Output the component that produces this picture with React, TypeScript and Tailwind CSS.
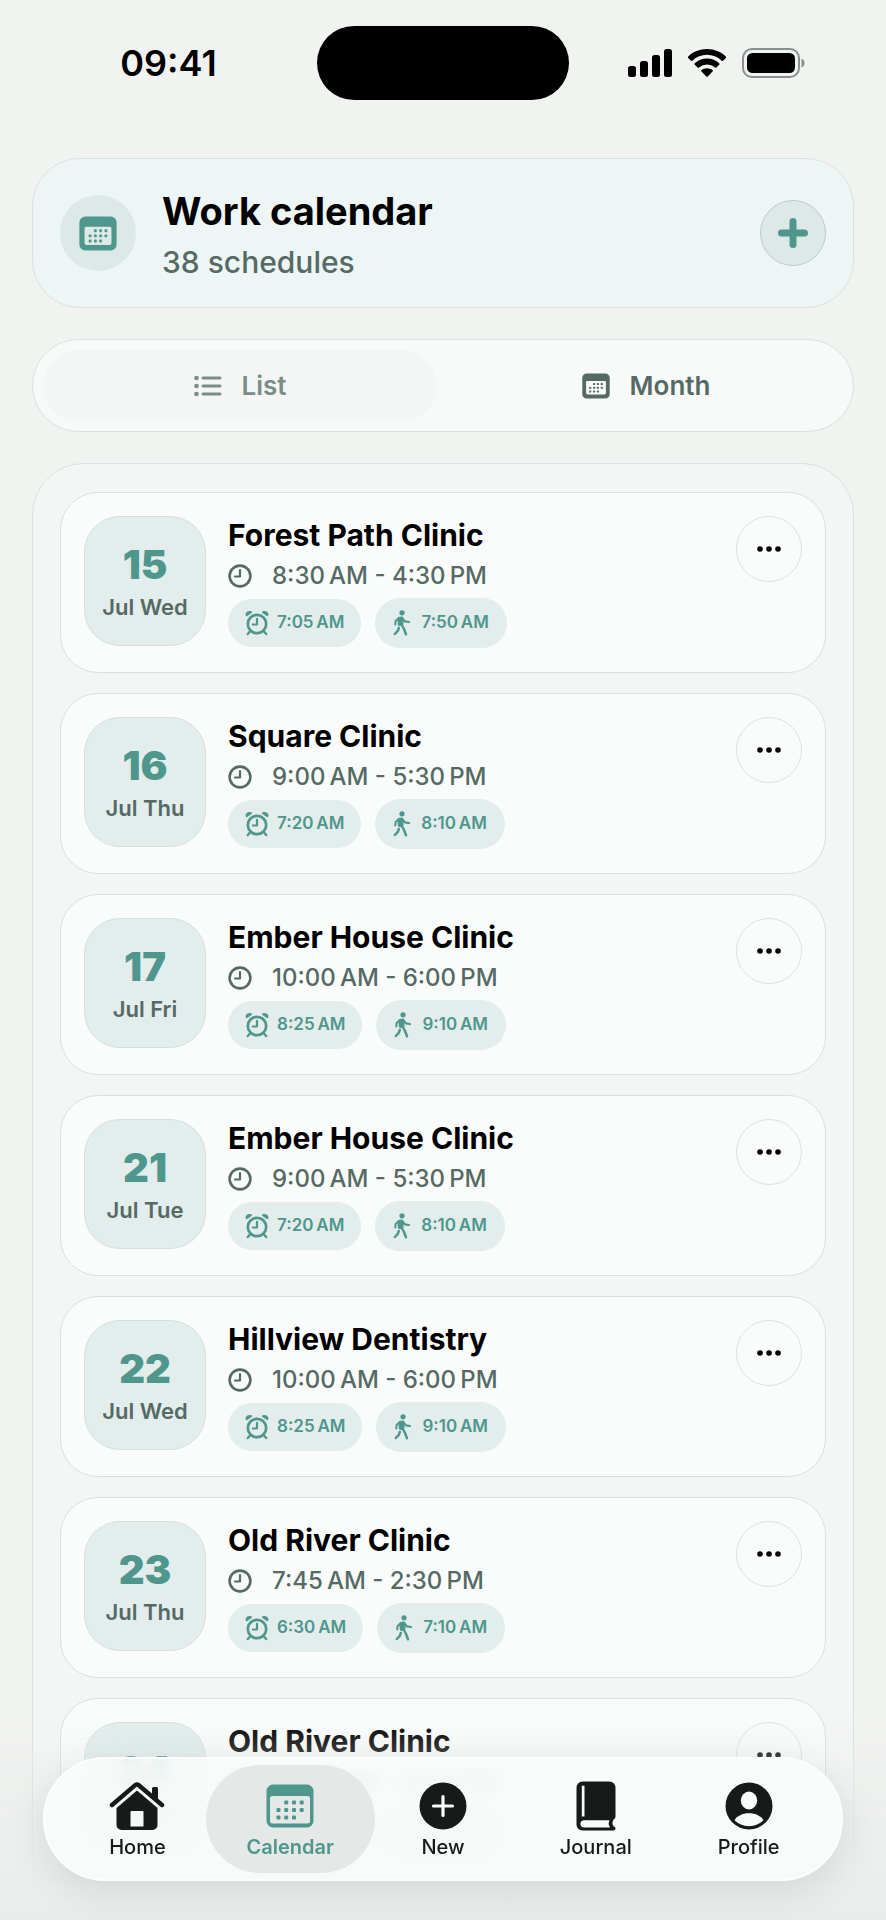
import React, { useState } from "react";

interface Schedule {
  id: number;
  day: number;
  label: string;
  clinic: string;
  start: string;
  end: string;
  alarm: string;
  leave: string;
}

interface IconProps {
  className?: string;
}

const schedules: Schedule[] = [
  { id: 1, day: 15, label: "Jul Wed", clinic: "Forest Path Clinic", start: "8:30", end: "4:30", alarm: "7:05", leave: "7:50" },
  { id: 2, day: 16, label: "Jul Thu", clinic: "Square Clinic", start: "9:00", end: "5:30", alarm: "7:20", leave: "8:10" },
  { id: 3, day: 17, label: "Jul Fri", clinic: "Ember House Clinic", start: "10:00", end: "6:00", alarm: "8:25", leave: "9:10" },
  { id: 4, day: 21, label: "Jul Tue", clinic: "Ember House Clinic", start: "9:00", end: "5:30", alarm: "7:20", leave: "8:10" },
  { id: 5, day: 22, label: "Jul Wed", clinic: "Hillview Dentistry", start: "10:00", end: "6:00", alarm: "8:25", leave: "9:10" },
  { id: 6, day: 23, label: "Jul Thu", clinic: "Old River Clinic", start: "7:45", end: "2:30", alarm: "6:30", leave: "7:10" },
  { id: 7, day: 24, label: "Jul Fri", clinic: "Old River Clinic", start: "10:00", end: "6:00", alarm: "8:25", leave: "9:10" },
];

// Thin space between the time and AM/PM
const am = (time: string) => `${time}\u2009AM`;
const pm = (time: string) => `${time}\u2009PM`;

const CalendarIcon = ({ className }: IconProps) => (
  <svg viewBox="0 0 48 44" className={className} fill="currentColor" aria-hidden="true">
    <path
      fillRule="evenodd"
      d="M7 .5h34A6.5 6.5 0 0 1 47.5 7v30a6.5 6.5 0 0 1-6.5 6.5H7A6.5 6.5 0 0 1 .5 37V7A6.5 6.5 0 0 1 7 .5ZM6.5 12A2.5 2.5 0 0 0 4 14.5V37a2.5 2.5 0 0 0 2.5 2.5h35A2.5 2.5 0 0 0 44 37V14.5A2.5 2.5 0 0 0 41.5 12Z"
    />
    {[18.5, 26, 33.5].map((y, row) =>
      [12.5, 20.2, 28, 35.7].map((x, col) =>
        (row === 0 && col === 0) || (row === 2 && col === 3) ? null : (
          <rect key={`${x}-${y}`} x={x - 2} y={y - 2} width="4" height="4" rx="1" />
        )
      )
    )}
  </svg>
);

// Thicker frame for the small sizes
const CalendarBoldIcon = ({ className }: IconProps) => (
  <svg viewBox="0 0 48 44" className={className} fill="currentColor" aria-hidden="true">
    <path
      fillRule="evenodd"
      d="M8 .5h32A7.5 7.5 0 0 1 47.5 8v28a7.5 7.5 0 0 1-7.5 7.5H8A7.5 7.5 0 0 1 .5 36V8A7.5 7.5 0 0 1 8 .5ZM9 13.5a2 2 0 0 0-2 2V34a2.5 2.5 0 0 0 2.5 2.5h29A2.5 2.5 0 0 0 41 34V15.5a2 2 0 0 0-2-2Z"
    />
    {[18.5, 25, 31.5].map((y, row) =>
      [14, 20.7, 27.3, 34].map((x, col) =>
        (row === 0 && col === 0) || (row === 2 && col === 3) ? null : (
          <rect key={`${x}-${y}`} x={x - 1.8} y={y - 1.8} width="3.6" height="3.6" rx="1" />
        )
      )
    )}
  </svg>
);

const ListIcon = ({ className }: IconProps) => (
  <svg viewBox="0 0 28 22" className={className} fill="currentColor" aria-hidden="true">
    <circle cx="2.5" cy="3" r="2.3" />
    <circle cx="2.5" cy="11" r="2.3" />
    <circle cx="2.5" cy="19" r="2.3" />
    <path d="M9 3h17M9 11h17M9 19h17" stroke="currentColor" strokeWidth="3" strokeLinecap="round" />
  </svg>
);

const ClockIcon = ({ className }: IconProps) => (
  <svg viewBox="0 0 24 24" className={className} fill="none" stroke="currentColor" strokeLinecap="round" strokeLinejoin="round" aria-hidden="true">
    <circle cx="12" cy="12" r="10.4" strokeWidth="2.6" />
    <path d="M12 6v6.5H7" strokeWidth="2.2" />
  </svg>
);

const AlarmIcon = ({ className }: IconProps) => (
  <svg viewBox="0 0 24 26" className={className} fill="none" stroke="currentColor" strokeLinecap="round" strokeLinejoin="round" aria-hidden="true">
    <circle cx="12" cy="14" r="9.2" strokeWidth="2.7" />
    <path d="M12 8.8v5.7H7.8" strokeWidth="2.2" />
    <path d="M5 21.5 2.8 24M19 21.5l2.2 2.5" strokeWidth="2.4" />
    <path d="M1.7 5.2C1 3 3.4 1.2 6 2.2ZM22.3 5.2C23 3 20.6 1.2 18 2.2Z" fill="currentColor" strokeWidth="2" />
  </svg>
);

const WalkIcon = ({ className }: IconProps) => (
  <svg viewBox="0 0 18 26" className={className} fill="none" stroke="currentColor" strokeLinecap="round" strokeLinejoin="round" aria-hidden="true">
    <circle cx="9" cy="2.8" r="2.6" fill="currentColor" stroke="none" />
    <path d="M5.8 8.5 8.8 8 9 14 6.4 14.5Z" fill="currentColor" strokeWidth="3" />
    <path d="M4.8 9 2.6 11 2.3 14.5" strokeWidth="2" />
    <path d="M10 8.8 11.8 11.3 16 12" strokeWidth="2.2" />
    <path d="M8.5 14.5 10.8 18.5 13 24.3" strokeWidth="2.5" />
    <path d="M5.8 18 4.8 20.8 1.8 24" strokeWidth="2.5" />
  </svg>
);

const HomeIcon = ({ className }: IconProps) => (
  <svg viewBox="0 0 56 50" className={className} fill="currentColor" aria-hidden="true">
    <path d="M3 24 26.2 4.2a2.8 2.8 0 0 1 3.6 0L53 24" fill="none" stroke="currentColor" strokeWidth="4.4" strokeLinecap="round" strokeLinejoin="round" />
    <path d="M43 15V7.5A1.5 1.5 0 0 1 44.5 6h3A1.5 1.5 0 0 1 49 7.5V20Z" />
    <path fillRule="evenodd" d="M28 9.5 48.5 27v17a5 5 0 0 1-5 5h-31a5 5 0 0 1-5-5V27ZM22.5 30a1 1 0 0 0-1 1v14.5h13V31a1 1 0 0 0-1-1Z" />
  </svg>
);

const NewIcon = ({ className }: IconProps) => (
  <svg viewBox="0 0 48 48" className={className} aria-hidden="true">
    <circle cx="24" cy="24" r="23.5" fill="currentColor" />
    <path d="M24 14.5v19M14.5 24h19" stroke="#fafcfb" strokeWidth="3.2" strokeLinecap="round" />
  </svg>
);

const JournalIcon = ({ className }: IconProps) => (
  <svg viewBox="0 0 40 50" className={className} fill="currentColor" aria-hidden="true">
    <path
      fillRule="evenodd"
      d="M6.5.5h27a6 6 0 0 1 6 6v29Q39.5 37.8 37.5 38.6 35.4 42.6 37.5 45.3 39.5 46 39.5 47.7 39.5 49.5 37.5 49.5H6.5a6 6 0 0 1-6-6v-37a6 6 0 0 1 6-6ZM5.8 4.8v30.8h2.7V4.8ZM7.5 39.2a3.7 3.7 0 0 0 0 7.3h26.7Q31.5 43 33.5 39.2Z"
    />
  </svg>
);

const ProfileIcon = ({ className }: IconProps) => (
  <svg viewBox="0 0 48 48" className={className} aria-hidden="true">
    <circle cx="24" cy="24" r="23.5" fill="currentColor" />
    <ellipse cx="24" cy="18.5" rx="8.2" ry="9" fill="#fafcfb" />
    <path d="M9.5 38.3C12 34 17.5 31.3 24 31.3S36 34 38.5 38.3C34.8 42 29.8 44.2 24 44.2S13.2 42 9.5 38.3Z" fill="#fafcfb" />
  </svg>
);

const tabs = [
  { name: "Home", Icon: HomeIcon, size: "w-14 h-[50px]" },
  { name: "Calendar", Icon: CalendarIcon, size: "w-12 h-11" },
  { name: "New", Icon: NewIcon, size: "w-12 h-12" },
  { name: "Journal", Icon: JournalIcon, size: "w-10 h-[50px]" },
  { name: "Profile", Icon: ProfileIcon, size: "w-12 h-12" },
];

const StatusBar = () => (
  <div className="grid grid-cols-[1fr_252px_1fr] items-center h-[74px]">
    <div className="pr-3 text-4xl font-semibold text-center">09:41</div>
    <div className="h-full bg-black rounded-full" />
    <div className="flex items-center justify-center gap-3.5 pl-2">
      <svg viewBox="0 0 46 28" className="w-[46px] h-7" aria-hidden="true">
        <rect x="1" y="17" width="8" height="11" rx="2.5" />
        <rect x="13" y="12" width="8" height="16" rx="2.5" />
        <rect x="25" y="6" width="8" height="22" rx="2.5" />
        <rect x="37" y="0" width="8" height="28" rx="2.5" />
      </svg>
      <svg viewBox="0 0 40 28" className="w-10 h-7" aria-hidden="true">
        <path d="M20 0C27.3 0 34 2.8 38.8 7.5a1 1 0 0 1 0 1.400L36 11.7a1 1 0 0 1-1.4 0A21 21 0 0 0 5.4 11.7a1 1 0 0 1-1.4 0L1.2 8.9a1 1 0 0 1 0-1.4C6 2.8 12.7 0 20 0Z" />
        <path d="M20 9.6c4.7 0 9 1.8 12.2 4.7a1 1 0 0 1 0 1.5l-2.8 2.8a1 1 0 0 1-1.4 0 11.8 11.8 0 0 0-16 0 1 1 0 0 1-1.4 0l-2.8-2.8a1 1 0 0 1 0-1.5C11 11.4 15.3 9.6 20 9.6Z" />
        <path d="M20 19.2c2.1 0 4 .7 5.5 1.9a1 1 0 0 1 0 1.5l-4.8 4.9a1 1 0 0 1-1.4 0l-4.8-4.9a1 1 0 0 1 0-1.5c1.5-1.2 3.4-1.9 5.5-1.9Z" />
      </svg>
      <svg viewBox="0 0 64 30" className="w-16 h-[30px]" aria-hidden="true">
        <rect x="2" y="1" width="56" height="28" rx="9" fill="none" stroke="#85928f" strokeWidth="2" />
        <rect x="6" y="5" width="48" height="20" rx="5.5" />
        <path d="M60.5 10.5c4 1.5 4 7.500 0 9Z" fill="#85928f" />
      </svg>
    </div>
  </div>
);

const ScheduleCard = ({ item }: { item: Schedule }) => (
  <li className="flex items-start gap-[22px] h-[181px] px-[23px] pt-[23px] bg-[#fafcfb] border border-[#d8e1df] rounded-[38px]">
    <div className="flex flex-col items-center justify-center w-[122px] h-[130px] pt-1 shrink-0 bg-[#e2edec] border border-[#d3e0de] rounded-[36px]">
      <span className="text-[40px] leading-12 font-black text-[#4f968c]">{item.day}</span>
      <span className="text-[22px] leading-9 font-semibold text-[#566a65]">{item.label}</span>
    </div>
    <div className="flex-1 min-w-0">
      <h2 className="text-3xl leading-[38px] font-bold">{item.clinic}</h2>
      <p className="flex items-center gap-5 h-11 text-2xl font-medium text-[#566a65]">
        <ClockIcon className="w-6 h-6" />
        <span>
          {am(item.start)} - {pm(item.end)}
        </span>
      </p>
      <div className="flex items-center gap-3.5 text-[17px] font-semibold text-[#4f968c]">
        <span className="flex items-center gap-2 h-12 px-[17px] bg-[#e2edec] rounded-full">
          <AlarmIcon className="w-6 h-[26px]" />
          {am(item.alarm)}
        </span>
        <span className="flex items-center gap-2.5 h-[50px] px-[18px] bg-[#e2edec] rounded-full">
          <WalkIcon className="w-[18px] h-[26px]" />
          {am(item.leave)}
        </span>
      </div>
    </div>
    <button
      type="button"
      aria-label={`Options for ${item.clinic}`}
      className="flex items-center justify-center w-[66px] h-[66px] shrink-0 border border-[#dce2e1] rounded-full"
    >
      <svg viewBox="0 0 24 6" className="w-6 h-1.5" aria-hidden="true">
        <circle cx="3" cy="3" r="2.8" />
        <circle cx="12" cy="3" r="2.8" />
        <circle cx="21" cy="3" r="2.8" />
      </svg>
    </button>
  </li>
);

const WorkCalendarPage = () => {
  const [view, setView] = useState("list");
  const [activeTab, setActiveTab] = useState("Calendar");

  return (
    <div className="h-screen overflow-hidden bg-[#f1f3f0] text-black font-['Inter','Liberation_Sans',sans-serif]">
      <div className="px-8 pt-[26px]">
        <StatusBar />

        <header className="flex items-center mt-[58px] h-[150px] px-[27px] bg-[#eef6f5] border border-[#d8e3e1] rounded-[48px]">
          <div className="flex items-center justify-center w-[76px] h-[76px] bg-[#dce9e7] rounded-full text-[#4f968c]">
            <CalendarBoldIcon className="w-[38px] h-[35px]" />
          </div>
          <div className="flex-1 pt-1 ml-[26px]">
            <h1 className="text-[38px] leading-[54px] font-bold">Work calendar</h1>
            <p className="text-3xl leading-12 font-medium text-[#566a65]">38 schedules</p>
          </div>
          <button
            type="button"
            aria-label="Add schedule"
            className="flex items-center justify-center w-[66px] h-[66px] bg-[#dce9e7] border border-[#bccbc8] rounded-full text-[#4f968c]"
          >
            <svg viewBox="0 0 30 30" className="w-[30px] h-[30px]" stroke="currentColor" strokeWidth="7" strokeLinecap="round" aria-hidden="true">
              <path d="M15 3.5v23M3.5 15h23" />
            </svg>
          </button>
        </header>

        <div className="grid grid-cols-2 gap-3 mt-[31px] h-[93px] p-2.5 bg-[#f8faf9] border border-[#d8e2e0] rounded-full text-[26px] font-semibold text-[#566a65]">
          <button
            type="button"
            onClick={() => setView("list")}
            className={`flex items-center justify-center gap-5 rounded-full ${view === "list" ? "bg-[#f4f6f5] text-[#7b8b87]" : ""}`}
          >
            <ListIcon className="w-7 h-[22px]" />
            List
          </button>
          <button
            type="button"
            onClick={() => setView("month")}
            className={`flex items-center justify-center gap-5 rounded-full ${view === "month" ? "bg-[#f4f6f5] text-[#7b8b87]" : ""}`}
          >
            <CalendarBoldIcon className="w-7 h-[26px]" />
            Month
          </button>
        </div>

        <ul className="flex flex-col gap-5 mt-[31px] px-[27px] py-7 bg-[#f4f6f5] border border-[#d8e2e0] rounded-[52px]">
          {schedules.map((item) => (
            <ScheduleCard key={item.id} item={item} />
          ))}
        </ul>
      </div>

      {/* Fade behind the tab bar */}
      <div className="fixed inset-x-0 bottom-0 h-[204px] pointer-events-none bg-linear-to-b from-[#eff2f0]/0 via-[#ebeeec]/80 via-60% to-[#e9ecea]" />

      <nav className="fixed bottom-[39px] inset-x-[43px] grid grid-cols-5 h-[124px] px-4 py-1.5 bg-[#fafcfb]/85 border-2 border-[#fcfefd] rounded-full shadow-[0_10px_36px_rgba(60,80,76,0.14)] backdrop-blur-sm">
        {tabs.map(({ name, Icon, size }) => (
          <button
            key={name}
            type="button"
            onClick={() => setActiveTab(name)}
            className={`flex flex-col items-center -mx-2 rounded-full text-xl ${
              activeTab === name ? "bg-[#e4e9e7] font-semibold text-[#4f968c]" : "font-medium text-[#161a19]"
            }`}
          >
            <span className="flex items-center justify-center h-[50px] mt-4">
              <Icon className={size} />
            </span>
            <span className="mt-0.5">{name}</span>
          </button>
        ))}
      </nav>
    </div>
  );
};

export default WorkCalendarPage;
